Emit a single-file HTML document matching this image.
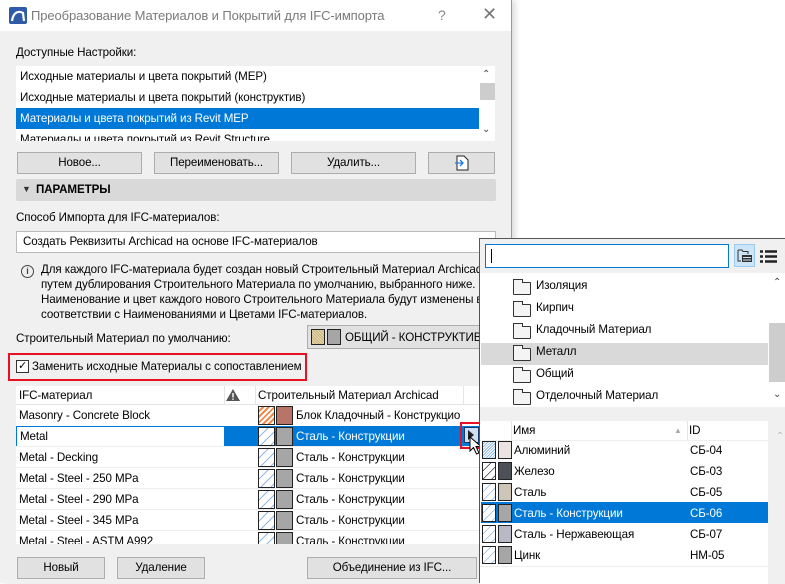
<!DOCTYPE html>
<html><head><meta charset="utf-8"><style>
*{margin:0;padding:0;box-sizing:border-box}
body{width:785px;height:583px;background:#fff;position:relative;overflow:hidden;font-family:"Liberation Sans","DejaVu Sans",sans-serif;font-size:11.6px;letter-spacing:-0.1px;color:#000}
.a{position:absolute;white-space:nowrap}
.dlg{position:absolute;left:0;top:0;width:512px;height:583px;background:#f0f0f0;border-right:1px solid #9a9a9a;box-shadow:3px 0 6px rgba(0,0,0,.15)}
.title{position:absolute;left:0;top:0;width:511px;height:31px;background:#fff}
.btn{position:absolute;height:22px;background:#e1e1e1;border:1px solid #adadad;text-align:center;line-height:20px}
.row{position:absolute;height:21px;line-height:21px}
.hat{position:absolute;width:17px;height:19px;border:1px solid #222;background:#fff repeating-linear-gradient(135deg,#fff 0 3px,#8fb9e8 3px 4px)}
.hat2{background:#fff repeating-linear-gradient(135deg,#fff 0 6px,#8fb9e8 6px 7px)}
.col{position:absolute;width:17px;height:19px;border:1px solid #222;background:#a6a6a6}
.sel{background:#0078d7;color:#fff}
.fold{position:absolute;width:18px;height:13px;border:1px solid #333;border-radius:1px;background:#f4f4f4}
.fold:before{content:"";position:absolute;left:-1px;top:-4px;width:8px;height:3px;border:1px solid #333;border-bottom:none;background:#f4f4f4}
</style></head><body>
<div class="dlg">
 <div class="title">
  <svg class="a" style="left:9px;top:7px" width="18" height="17" viewBox="0 0 18 17"><rect width="18" height="17" rx="2" fill="#2f5aa8"/><path d="M3 14 C4 6 9 3 14 6 L15 14" stroke="#fff" stroke-width="2.2" fill="none"/></svg>
  <div class="a" style="left:31px;top:8px;font-size:13px;color:#7a7a7a">Преобразование Материалов и Покрытий для IFC-импорта</div>
  <div class="a" style="left:438px;top:7px;font-size:14px;color:#888">?</div>
  <div class="a" style="left:482px;top:4px;font-size:18px;color:#777">✕</div>
 </div>
 <div class="a" style="left:16px;top:46px">Доступные Настройки:</div>
 <div class="a" style="left:16px;top:66px;width:479px;height:75px;background:#fff;overflow:hidden">
  <div class="row" style="left:4px;top:0">Исходные материалы и цвета покрытий (MEP)</div>
  <div class="row" style="left:4px;top:21px">Исходные материалы и цвета покрытий (конструктив)</div>
  <div class="row sel" style="left:0;top:42px;width:463px;padding-left:4px">Материалы и цвета покрытий из Revit MEP</div>
  <div class="row" style="left:4px;top:63px">Материалы и цвета покрытий из Revit Structure</div>
  <div class="a" style="left:464px;top:17px;width:15px;height:17px;background:#cdcdcd"></div>
  <div class="a" style="left:466px;top:3px;font-size:10px;color:#444">⌃</div>
  <div class="a" style="left:466px;top:58px;font-size:10px;color:#444">⌄</div>
 </div>
 <div class="btn" style="left:17px;top:152px;width:125px">Новое...</div>
 <div class="btn" style="left:154px;top:152px;width:125px">Переименовать...</div>
 <div class="btn" style="left:291px;top:152px;width:125px">Удалить...</div>
 <div class="btn" style="left:428px;top:152px;width:67px"><svg width="14" height="16" style="margin-top:2px" viewBox="0 0 14 16"><path d="M2 1H9L13 5V15H2Z" fill="#fff" stroke="#222"/><path d="M0 8H8M5 5L8 8L5 11" stroke="#1e7be0" stroke-width="1.3" fill="none"/></svg></div>
 <div class="a" style="left:16px;top:179px;width:480px;height:22px;background:#d9d9d9;border-radius:2px"></div>
 <div class="a" style="left:22px;top:184px;font-size:9px;color:#333">▼</div>
 <div class="a" style="left:36px;top:183px;font-weight:bold">ПАРАМЕТРЫ</div>
 <div class="a" style="left:16px;top:211px">Способ Импорта для IFC-материалов:</div>
 <div class="a" style="left:16px;top:231px;width:480px;height:22px;background:#fff;border:1px solid #bbb;padding-left:6px;line-height:20px">Создать Реквизиты Archicad на основе IFC-материалов</div>
 <div class="a" style="left:21px;top:265px;width:13px;height:13px;border:1px solid #444;border-radius:50%;font-size:9px;line-height:11px;text-align:center;font-weight:bold;color:#444">i</div>
 <div class="a" style="left:41px;top:262px;line-height:15px">Для каждого IFC-материала будет создан новый Строительный Материал Archicad<br>путем дублирования Строительного Материала по умолчанию, выбранного ниже.<br>Наименование и цвет каждого нового Строительного Материала будут изменены в<br>соответствии с Наименованиями и Цветами IFC-материалов.</div>
 <div class="a" style="left:16px;top:332px">Строительный Материал по умолчанию:</div>
 <div class="a" style="left:307px;top:325px;width:180px;height:24px;background:#e1e1e1;border:1px solid #adadad"></div>
 <div class="a" style="left:311px;top:329px;width:14px;height:16px;border:1px solid #222;background:#d8c89a repeating-linear-gradient(45deg,#c9b27a 0 1px,#e8dcb8 1px 2px)"></div>
 <div class="a" style="left:327px;top:329px;width:14px;height:16px;border:1px solid #222;background:#a6a6a6"></div>
 <div class="a" style="left:345px;top:331px">ОБЩИЙ - КОНСТРУКТИВ...</div>
 <div class="a" style="left:8px;top:353px;width:299px;height:28px;border:2px solid #e81123"></div>
 <div class="a" style="left:16px;top:360px;width:13px;height:13px;border:1px solid #333;background:#fff;font-size:11px;line-height:11px;text-align:center">✓</div>
 <div class="a" style="left:32px;top:360px">Заменить исходные Материалы с сопоставлением</div>
 <div class="a" style="left:16px;top:386px;width:463px;height:158px;background:#fff;overflow:hidden">
  <div class="a" style="left:0;top:0;width:463px;height:19px;border-bottom:1px solid #e5e5e5"></div>
  <div class="a" style="left:208px;top:0;width:1px;height:19px;background:#e5e5e5"></div>
  <div class="a" style="left:239px;top:0;width:1px;height:19px;background:#e5e5e5"></div>
  <div class="a" style="left:447px;top:0;width:1px;height:19px;background:#e5e5e5"></div>
  <div class="a" style="left:3px;top:3px">IFC-материал</div>
  <svg class="a" style="left:209px;top:2px" width="16" height="14" viewBox="0 0 16 14"><path d="M8 1L15 13H1Z" fill="#555"/><rect x="7.3" y="5" width="1.4" height="4.5" fill="#fff"/><rect x="7.3" y="10.5" width="1.4" height="1.4" fill="#fff"/></svg>
  <div class="a" style="left:242px;top:3px">Строительный Материал Archicad</div>
  <div class="row" style="left:3px;top:19px">Masonry - Concrete Block</div>
  <div class="row sel" style="left:0;top:40px;width:463px"></div>
  <div class="a" style="left:0;top:40px;width:209px;height:21px;background:#fff;border:1px solid #0078d7;padding-left:3px;line-height:19px">Metal</div>
  <div class="row" style="left:3px;top:61px">Metal - Decking</div>
  <div class="row" style="left:3px;top:82px">Metal - Steel - 250 MPa</div>
  <div class="row" style="left:3px;top:103px">Metal - Steel - 290 MPa</div>
  <div class="row" style="left:3px;top:124px">Metal - Steel - 345 MPa</div>
  <div class="row" style="left:3px;top:145px">Metal - Steel - ASTM A992</div>
  <div class="a" style="left:242px;top:20px;width:17px;height:19px;border:1px solid #222;background:repeating-linear-gradient(135deg,#fff 0 2px,#f08a4b 2px 4px)"></div>
  <div class="a" style="left:260px;top:20px;width:17px;height:19px;border:1px solid #222;background:#b87468"></div>
  <div class="row" style="left:280px;top:19px">Блок Кладочный - Конструкцио</div>
  <div class="hat hat2" style="left:242px;top:41px"></div><div class="col" style="left:260px;top:41px"></div>
  <div class="row" style="left:280px;top:40px;color:#fff">Сталь - Конструкции</div>
  <div class="hat hat2" style="left:242px;top:62px"></div><div class="col" style="left:260px;top:62px"></div><div class="row" style="left:280px;top:61px">Сталь - Конструкции</div>
  <div class="hat hat2" style="left:242px;top:83px"></div><div class="col" style="left:260px;top:83px"></div><div class="row" style="left:280px;top:82px">Сталь - Конструкции</div>
  <div class="hat hat2" style="left:242px;top:104px"></div><div class="col" style="left:260px;top:104px"></div><div class="row" style="left:280px;top:103px">Сталь - Конструкции</div>
  <div class="hat hat2" style="left:242px;top:125px"></div><div class="col" style="left:260px;top:125px"></div><div class="row" style="left:280px;top:124px">Сталь - Конструкции</div>
  <div class="hat hat2" style="left:242px;top:146px"></div><div class="col" style="left:260px;top:146px"></div><div class="row" style="left:280px;top:145px">Сталь - Конструкции</div>
  <div class="a" style="left:0;top:60px;width:463px;height:1px;background:#eee"></div>
  <div class="a" style="left:0;top:81px;width:463px;height:1px;background:#eee"></div>
  <div class="a" style="left:0;top:102px;width:463px;height:1px;background:#eee"></div>
  <div class="a" style="left:0;top:123px;width:463px;height:1px;background:#eee"></div>
  <div class="a" style="left:0;top:144px;width:463px;height:1px;background:#eee"></div>
 </div>
 <div class="a" style="left:460px;top:422px;width:23px;height:27px;border:2px solid #e81123"></div>
 <div class="a" style="left:464px;top:427px;width:15px;height:16px;background:#cfe0f5;border:1px solid #1a3a6a"></div>
 <svg class="a" style="left:467px;top:430px" width="8" height="10"><path d="M1 0L7 5L1 10Z" fill="#222"/></svg>
 <svg class="a" style="left:469px;top:436px" width="14" height="20" viewBox="0 0 14 20"><path d="M1 1V15L4.5 11.5L7.5 18L10 17L7 10.5H12Z" fill="#fff" stroke="#000" stroke-width="1"/></svg>
 <div class="btn" style="left:17px;top:557px;width:88px">Новый</div>
 <div class="btn" style="left:117px;top:557px;width:88px">Удаление</div>
 <div class="btn" style="left:307px;top:557px;width:170px">Объединение из IFC...</div>
</div>
<div class="a" style="left:479px;top:238px;width:306px;height:345px;background:#f0f0f0;border:1px solid #555;border-right:none;border-bottom:none">
 <div class="a" style="left:5px;top:5px;width:244px;height:24px;background:#fff;border:1px solid #0078d7"></div>
 <div class="a" style="left:11px;top:10px;width:1px;height:14px;background:#000"></div>
 <div class="a" style="left:254px;top:5px;width:21px;height:23px;background:#cce4f7;border:1px solid #99c9ef"></div>
 <svg class="a" style="left:257px;top:9px" width="16" height="15" viewBox="0 0 16 15"><path d="M1 2H5L6 3.5H11V6" stroke="#333" fill="none"/><path d="M1 2V13H4" stroke="#333" fill="none"/><rect x="5" y="7" width="10" height="7" fill="#333"/><path d="M6 9.5H14M6 12H14" stroke="#cce4f7"/></svg>
 <svg class="a" style="left:280px;top:11px" width="17" height="13"><path d="M0 1.5H3M5 1.5H17M0 6.5H3M5 6.5H17M0 11.5H3M5 11.5H17" stroke="#222" stroke-width="2.4"/></svg>
 <div class="a" style="left:0;top:34px;width:306px;height:134px;background:#fff"></div>
 <div class="a" style="left:1px;top:104px;width:287px;height:22px;background:#d9d9d9"></div>
 <div class="a" style="left:289px;top:84px;width:17px;height:59px;background:#cdcdcd"></div>
 <div class="a" style="left:293px;top:38px;font-size:10px;color:#444">⌃</div>
 <div class="a" style="left:293px;top:150px;font-size:10px;color:#444">⌄</div>
 <div class="fold" style="left:33px;top:43px"></div><div class="a" style="left:56px;top:40px">Изоляция</div>
 <div class="fold" style="left:33px;top:65px"></div><div class="a" style="left:56px;top:62px">Кирпич</div>
 <div class="fold" style="left:33px;top:87px"></div><div class="a" style="left:56px;top:84px">Кладочный Материал</div>
 <div class="fold" style="left:33px;top:109px"></div><div class="a" style="left:56px;top:106px">Металл</div>
 <div class="fold" style="left:33px;top:131px"></div><div class="a" style="left:56px;top:128px">Общий</div>
 <div class="fold" style="left:33px;top:153px"></div><div class="a" style="left:56px;top:150px">Отделочный Материал</div>
 <div class="a" style="left:0;top:182px;width:288px;height:163px;background:#fff"></div>
 <div class="a" style="left:288px;top:182px;width:18px;height:163px;background:#f0f0f0"></div>
 <div class="a" style="left:296px;top:192px;font-size:10px;color:#bbb">⌃</div>
 <div class="a" style="left:31px;top:182px;width:1px;height:19px;background:#e5e5e5"></div>
 <div class="a" style="left:207px;top:182px;width:1px;height:19px;background:#e5e5e5"></div>
 <div class="a" style="left:0;top:201px;width:288px;height:1px;background:#eee"></div>
 <div class="a" style="left:33px;top:185px">Имя</div>
 <div class="a" style="left:194px;top:187px;font-size:8px;color:#aaa">▲</div>
 <div class="a" style="left:209px;top:185px">ID</div>
 <div class="row sel" style="left:1px;top:263px;width:287px"></div>
 <div class="a" style="left:2px;top:202px;width:14px;height:18px;border:1px solid #222;background:repeating-linear-gradient(135deg,#fff 0 1px,#8fb9e8 1px 2px)"></div><div class="a" style="left:18px;top:202px;width:14px;height:18px;border:1px solid #222;background:#ebe3e1"></div><div class="row" style="left:34px;top:201px">Алюминий</div><div class="row" style="left:210px;top:201px">СБ-04</div>
 <div class="a" style="left:2px;top:223px;width:14px;height:18px;border:1px solid #222;background:#fff repeating-linear-gradient(135deg,#fff 0 5px,#333 5px 6px)"></div><div class="a" style="left:18px;top:223px;width:14px;height:18px;border:1px solid #222;background:#4d5057"></div><div class="row" style="left:34px;top:222px">Железо</div><div class="row" style="left:210px;top:222px">СБ-03</div>
 <div class="a" style="left:2px;top:244px;width:14px;height:18px;border:1px solid #222;background:repeating-linear-gradient(135deg,#fff 0 5px,#8fb9e8 5px 6px)"></div><div class="a" style="left:18px;top:244px;width:14px;height:18px;border:1px solid #222;background:#cdc5b7"></div><div class="row" style="left:34px;top:243px">Сталь</div><div class="row" style="left:210px;top:243px">СБ-05</div>
 <div class="a" style="left:2px;top:265px;width:14px;height:18px;border:1px solid #222;background:repeating-linear-gradient(135deg,#fff 0 5px,#8fb9e8 5px 6px)"></div><div class="a" style="left:18px;top:265px;width:14px;height:18px;border:1px solid #222;background:#a6a6a6"></div><div class="row" style="left:34px;top:264px;color:#fff">Сталь - Конструкции</div><div class="row" style="left:210px;top:264px;color:#fff">СБ-06</div>
 <div class="a" style="left:2px;top:286px;width:14px;height:18px;border:1px solid #222;background:repeating-linear-gradient(135deg,#fff 0 5px,#8fb9e8 5px 6px)"></div><div class="a" style="left:18px;top:286px;width:14px;height:18px;border:1px solid #222;background:#b9b8c5"></div><div class="row" style="left:34px;top:285px">Сталь - Нержавеющая</div><div class="row" style="left:210px;top:285px">СБ-07</div>
 <div class="a" style="left:2px;top:307px;width:14px;height:18px;border:1px solid #222;background:repeating-linear-gradient(135deg,#fff 0 5px,#8fb9e8 5px 6px)"></div><div class="a" style="left:18px;top:307px;width:14px;height:18px;border:1px solid #222;background:#a6a6a6"></div><div class="row" style="left:34px;top:306px">Цинк</div><div class="row" style="left:210px;top:306px">НМ-05</div>
 <div class="a" style="left:0;top:327px;width:288px;height:1px;background:#eee"></div>
</div>
</body></html>
